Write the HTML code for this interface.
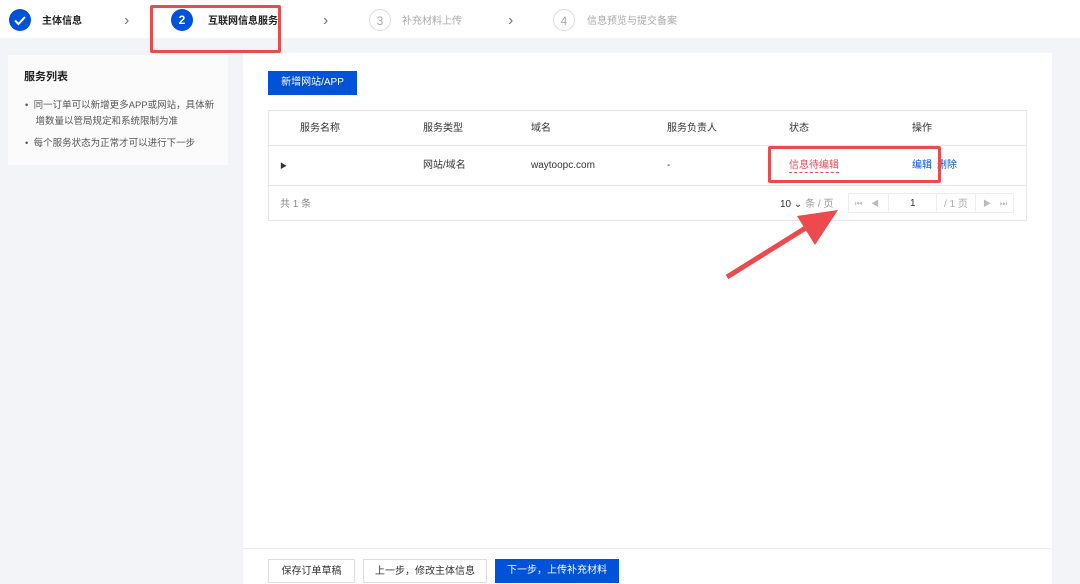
<!DOCTYPE html>
<html><head><meta charset="utf-8"><style>
*{margin:0;padding:0;box-sizing:border-box}
body{width:1080px;height:584px;overflow:hidden;background:#f3f4f7;font-family:"Liberation Sans","Noto Sans CJK SC",sans-serif;font-size:10px;color:#333;position:relative}
.a{position:absolute;white-space:nowrap;line-height:12px}
.top{left:0;top:0;width:1080px;height:38px;background:#fff}
.circ{width:22px;height:22px;border-radius:50%;text-align:center;line-height:22px;font-size:12px}
.chev{color:#777;font-size:16px;line-height:16px}
.btn{height:24px;line-height:24px;text-align:center;font-size:10px}
</style></head><body>
<div class="a top"></div>
<div class="a circ" style="left:9px;top:9px;background:#0052d9;color:#fff"><svg width="22" height="22"><path d="M6 11.5l3.5 3.5 6.5-7" stroke="#fff" stroke-width="2" fill="none"/></svg></div>
<div class="a" style="left:42px;top:16px;font-weight:bold;color:#222">主体信息</div>
<div class="a chev" style="left:124px;top:13px">›</div>
<div class="a circ" style="left:171px;top:9px;background:#0052d9;color:#fff;font-weight:bold">2</div>
<div class="a" style="left:208px;top:16px;font-weight:bold;color:#222">互联网信息服务</div>
<div class="a chev" style="left:323px;top:13px">›</div>
<div class="a circ" style="left:369px;top:9px;border:1px solid #ddd;color:#aaa">3</div>
<div class="a" style="left:402px;top:16px;color:#aaa">补充材料上传</div>
<div class="a chev" style="left:508px;top:13px">›</div>
<div class="a circ" style="left:553px;top:9px;border:1px solid #ddd;color:#aaa">4</div>
<div class="a" style="left:587px;top:16px;color:#aaa">信息预览与提交备案</div>
<div class="a" style="left:150px;top:5px;width:131px;height:48px;border:3px solid #ea4b4d;border-radius:2px"></div>

<div class="a" style="left:8px;top:55px;width:220px;height:110px;background:#fbfbfc"></div>
<div class="a" style="left:24px;top:71px;font-size:11px;font-weight:bold;color:#222">服务列表</div>
<div class="a" style="left:25px;top:98px;color:#555;line-height:16px;font-size:9.5px">• &nbsp;同一订单可以新增更多APP或网站，具体新<br>&nbsp;&nbsp;&nbsp;&nbsp;增数量以管局规定和系统限制为准</div>
<div class="a" style="left:25px;top:138px;color:#555;font-size:9.5px">• &nbsp;每个服务状态为正常才可以进行下一步</div>

<div class="a" style="left:243px;top:53px;width:809px;height:495px;background:#fff"></div>
<div class="a btn" style="left:268px;top:71px;width:89px;background:#0052d9;color:#fff">新增网站/APP</div>
<div class="a" style="left:268px;top:110px;width:759px;height:111px;border:1px solid #e6e6e6"></div>
<div class="a" style="left:268px;top:145px;width:759px;height:1px;background:#e6e6e6"></div>
<div class="a" style="left:268px;top:185px;width:759px;height:1px;background:#e6e6e6"></div>
<div class="a" style="left:300px;top:123px">服务名称</div>
<div class="a" style="left:423px;top:123px">服务类型</div>
<div class="a" style="left:531px;top:123px">域名</div>
<div class="a" style="left:667px;top:123px">服务负责人</div>
<div class="a" style="left:789px;top:123px">状态</div>
<div class="a" style="left:912px;top:123px">操作</div>
<div class="a" style="left:280px;top:161px;font-size:7px">▶</div>
<div class="a" style="left:423px;top:160px">网站/域名</div>
<div class="a" style="left:531px;top:160px">waytoopc.com</div>
<div class="a" style="left:667px;top:160px">-</div>
<div class="a" style="left:789px;top:160px;color:#e34d59;border-bottom:1px dashed #e34d59">信息待编辑</div>
<div class="a" style="left:912px;top:160px;color:#0052d9">编辑</div>
<div class="a" style="left:937px;top:160px;color:#0052d9">删除</div>
<div class="a" style="left:768px;top:146px;width:173px;height:37px;border:3px solid #ea4b4d;border-radius:2px"></div>
<div class="a" style="left:280px;top:199px;color:#888">共 1 条</div>
<div class="a" style="left:780px;top:199px;color:#333">10 ⌄ <span style="color:#999">条 / 页</span></div>
<div class="a" style="left:848px;top:193px;width:166px;height:20px;border:1px solid #eee"></div>
<div class="a" style="left:855px;top:198px;color:#bbb;font-size:8px">⏮ &nbsp;&nbsp; ◀</div>
<div class="a" style="left:888px;top:193px;width:49px;height:20px;border-left:1px solid #eee;border-right:1px solid #eee"></div>
<div class="a" style="left:910px;top:198px">1</div>
<div class="a" style="left:944px;top:199px;color:#aaa">/ 1 页</div>
<div class="a" style="left:975px;top:193px;width:1px;height:20px;background:#eee"></div>
<div class="a" style="left:983px;top:198px;color:#bbb;font-size:8px">▶ &nbsp;&nbsp; ⏭</div>
<svg class="a" style="left:0;top:0" width="1080" height="584"><path d="M727 277L812 224" stroke="#ec4a4d" stroke-width="5"/><polygon points="838,210 797,216 815,245" fill="#ec4a4d"/></svg>

<div class="a" style="left:243px;top:548px;width:809px;height:36px;background:#fff;border-top:1px solid #eee"></div>
<div class="a btn" style="left:268px;top:559px;width:87px;border:1px solid #ddd;background:#fff">保存订单草稿</div>
<div class="a btn" style="left:363px;top:559px;width:124px;border:1px solid #ddd;background:#fff">上一步，修改主体信息</div>
<div class="a btn" style="left:495px;top:559px;width:124px;background:#0052d9;color:#fff">下一步，上传补充材料</div>
</body></html>
